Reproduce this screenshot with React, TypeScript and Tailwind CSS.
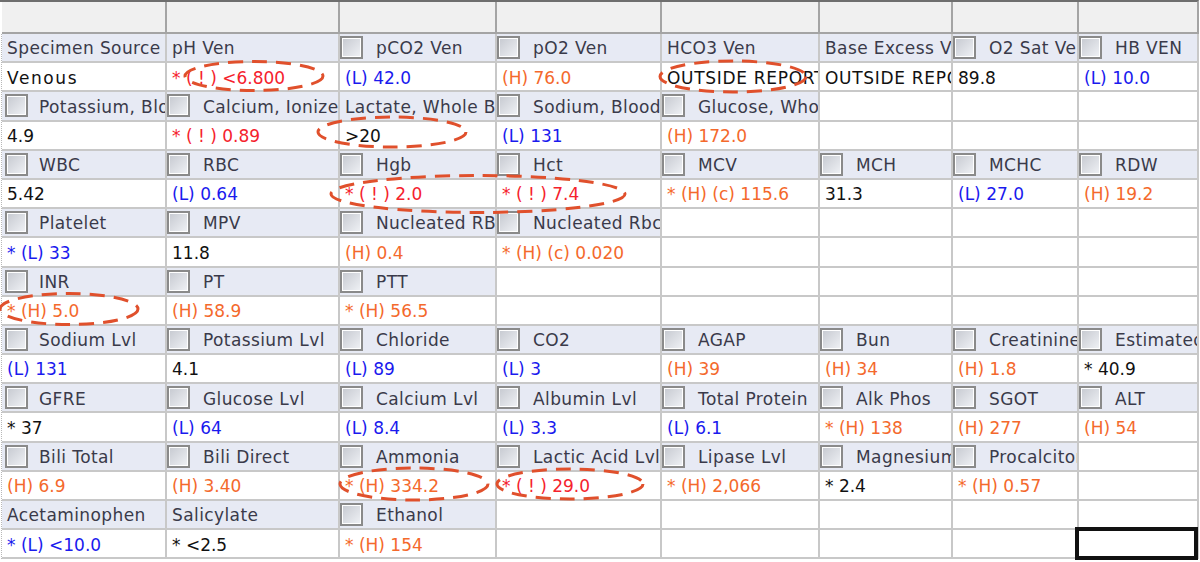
import React from "react";

type Tone = "k" | "w" | "v" | "r" | "b" | "o";
type Cell = { t: string; cb?: boolean; tone?: Tone } | null;

const toneClass: Record<Tone, string> = {
  k: "text-[#111111]",
  // plain words come out wider than digits in the source grid
  w: "text-[#111111] tracking-[0.7px]",
  v: "text-[#111111] tracking-[1.6px]",
  r: "text-[#f5222d]",
  b: "text-[#1a1aee]",
  o: "text-[#f4692c]",
};

// label helpers
const L = (t: string): Cell => ({ t });
const C = (t: string): Cell => ({ t, cb: true });
const k = (t: string): Cell => ({ t, tone: "k" });
const w = (t: string): Cell => ({ t, tone: "w" });
const r = (t: string): Cell => ({ t, tone: "r" });
const b = (t: string): Cell => ({ t, tone: "b" });
const o = (t: string): Cell => ({ t, tone: "o" });
const _ = null;

const rows: Cell[][] = [
  [L("Specimen Source"), L("pH Ven"), C("pCO2 Ven"), C("pO2 Ven"), L("HCO3 Ven"), L("Base Excess Ven"), C("O2 Sat Ven"), C("HB VEN")],
  [{ t: "Venous", tone: "v" }, r("* ( ! ) <6.800"), b("(L) 42.0"), o("(H) 76.0"), w("OUTSIDE REPORT"), w("OUTSIDE REPORT"), k("89.8"), b("(L) 10.0")],
  [C("Potassium, Blood"), C("Calcium, Ionized"), L("Lactate, Whole Blood"), C("Sodium, Blood"), C("Glucose, Whole"), _, _, _],
  [k("4.9"), r("* ( ! ) 0.89"), k(">20"), b("(L) 131"), o("(H) 172.0"), _, _, _],
  [C("WBC"), C("RBC"), C("Hgb"), C("Hct"), C("MCV"), C("MCH"), C("MCHC"), C("RDW")],
  [k("5.42"), b("(L) 0.64"), r("* ( ! ) 2.0"), r("* ( ! ) 7.4"), o("* (H) (c) 115.6"), k("31.3"), b("(L) 27.0"), o("(H) 19.2")],
  [C("Platelet"), C("MPV"), C("Nucleated RBC"), C("Nucleated Rbc"), _, _, _, _],
  [b("* (L) 33"), k("11.8"), o("(H) 0.4"), o("* (H) (c) 0.020"), _, _, _, _],
  [C("INR"), C("PT"), C("PTT"), _, _, _, _, _],
  [o("* (H) 5.0"), o("(H) 58.9"), o("* (H) 56.5"), _, _, _, _, _],
  [C("Sodium Lvl"), C("Potassium Lvl"), C("Chloride"), C("CO2"), C("AGAP"), C("Bun"), C("Creatinine"), C("Estimated")],
  [b("(L) 131"), k("4.1"), b("(L) 89"), b("(L) 3"), o("(H) 39"), o("(H) 34"), o("(H) 1.8"), k("* 40.9")],
  [C("GFRE"), C("Glucose Lvl"), C("Calcium Lvl"), C("Albumin Lvl"), C("Total Protein"), C("Alk Phos"), C("SGOT"), C("ALT")],
  [k("* 37"), b("(L) 64"), b("(L) 8.4"), b("(L) 3.3"), b("(L) 6.1"), o("* (H) 138"), o("(H) 277"), o("(H) 54")],
  [C("Bili Total"), C("Bili Direct"), C("Ammonia"), C("Lactic Acid Lvl"), C("Lipase Lvl"), C("Magnesium"), C("Procalcitonin"), _],
  [o("(H) 6.9"), o("(H) 3.40"), o("* (H) 334.2"), r("* ( ! ) 29.0"), o("* (H) 2,066"), k("* 2.4"), o("* (H) 0.57"), _],
  [L("Acetaminophen"), L("Salicylate"), C("Ethanol"), _, _, _, _, _],
  [b("* (L) <10.0"), k("* <2.5"), o("* (H) 154"), _, _, _, _, _],
];

function Checkbox() {
  return (
    <span className="block w-[23px] h-[23px] shrink-0 border-2 border-[#8a8a8a] bg-white p-px">
      <span className="block w-full h-full bg-gradient-to-br from-[#c8cbd2] to-[#eef0f4]" />
    </span>
  );
}

function GridCell({ cell, label, first }: { cell: Cell; label: boolean; first: boolean }) {
  if (!cell) return <div className="bg-white border-r-2 border-b-2 border-[#c8c8c8]" />;
  if (label) {
    return (
      <div className="bg-[#e7eaf4] border-r-2 border-b-2 border-[#c8c8c8] flex items-center overflow-hidden whitespace-nowrap text-[#3a3a4a] tracking-[0.4px]">
        {cell.cb ? (
          <>
            <span className={first ? "ml-[3px]" : "ml-0"}><Checkbox /></span>
            <span className={first ? "ml-[11px] pt-[3px]" : "ml-[13px] pt-[3px]"}>{cell.t}</span>
          </>
        ) : (
          <span className="ml-[5px] pt-[3px]">{cell.t}</span>
        )}
      </div>
    );
  }
  return (
    <div className={`bg-white border-r-2 border-b-2 border-[#c8c8c8] flex items-center overflow-hidden whitespace-nowrap pl-[5px] pt-[3px] ${toneClass[cell.tone ?? "k"]}`}>
      {cell.t}
    </div>
  );
}

const ovals = [
  { cx: 254, cy: 76, rx: 69, ry: 14.5 },
  { cx: 392, cy: 132, rx: 74, ry: 15 },
  { cx: 733, cy: 76.5, rx: 73, ry: 15.5 },
  { cx: 478, cy: 194, rx: 147, ry: 18.5 },
  { cx: 69, cy: 309, rx: 69, ry: 15.5 },
  { cx: 414, cy: 484, rx: 74, ry: 16 },
  { cx: 570, cy: 484, rx: 73, ry: 15 },
];

export default function App() {
  return (
    <div className="relative w-[1200px] h-[562px] bg-white overflow-hidden font-['DejaVu_Sans','Liberation_Sans',sans-serif] text-[17px]">
      <div className="border-t-2 border-[#6e6e6e] border-r-2 border-r-[#a8a8a8] w-[1199px] pl-px">
        {/* header strip */}
        <div className="ml-px grid grid-cols-[165px_173px_157px_165px_158px_133px_126px_120px] h-[32px] bg-[#f0f0f0]">
          {Array.from({ length: 8 }).map((_v, i) => (
            <div key={i} className="border-r-2 border-b-2 border-[#a4a4a4]" />
          ))}
        </div>
        {/* results grid */}
        <div className="relative border-l border-dotted border-[#b8b8b8] grid grid-cols-[165px_173px_157px_165px_158px_133px_126px_120px] auto-rows-[29.2px]">
          {rows.map((row, y) =>
            row.map((cell, x) => <GridCell key={`${y}-${x}`} cell={cell} label={y % 2 === 0} first={x === 0} />)
          )}
          {/* selected cell */}
          <div className="absolute right-[-1px] bottom-[-1px] w-[123px] h-[33px] border-4 border-[#111111]" />
        </div>
      </div>
      {/* hand drawn circles on the screenshot */}
      <svg className="absolute inset-0 pointer-events-none" width={1200} height={562}>
        {ovals.map((e, i) => (
          <ellipse key={i} cx={e.cx} cy={e.cy} rx={e.rx} ry={e.ry} fill="none" stroke="#e0502c" strokeWidth={3} strokeDasharray="15 9" />
        ))}
      </svg>
    </div>
  );
}
